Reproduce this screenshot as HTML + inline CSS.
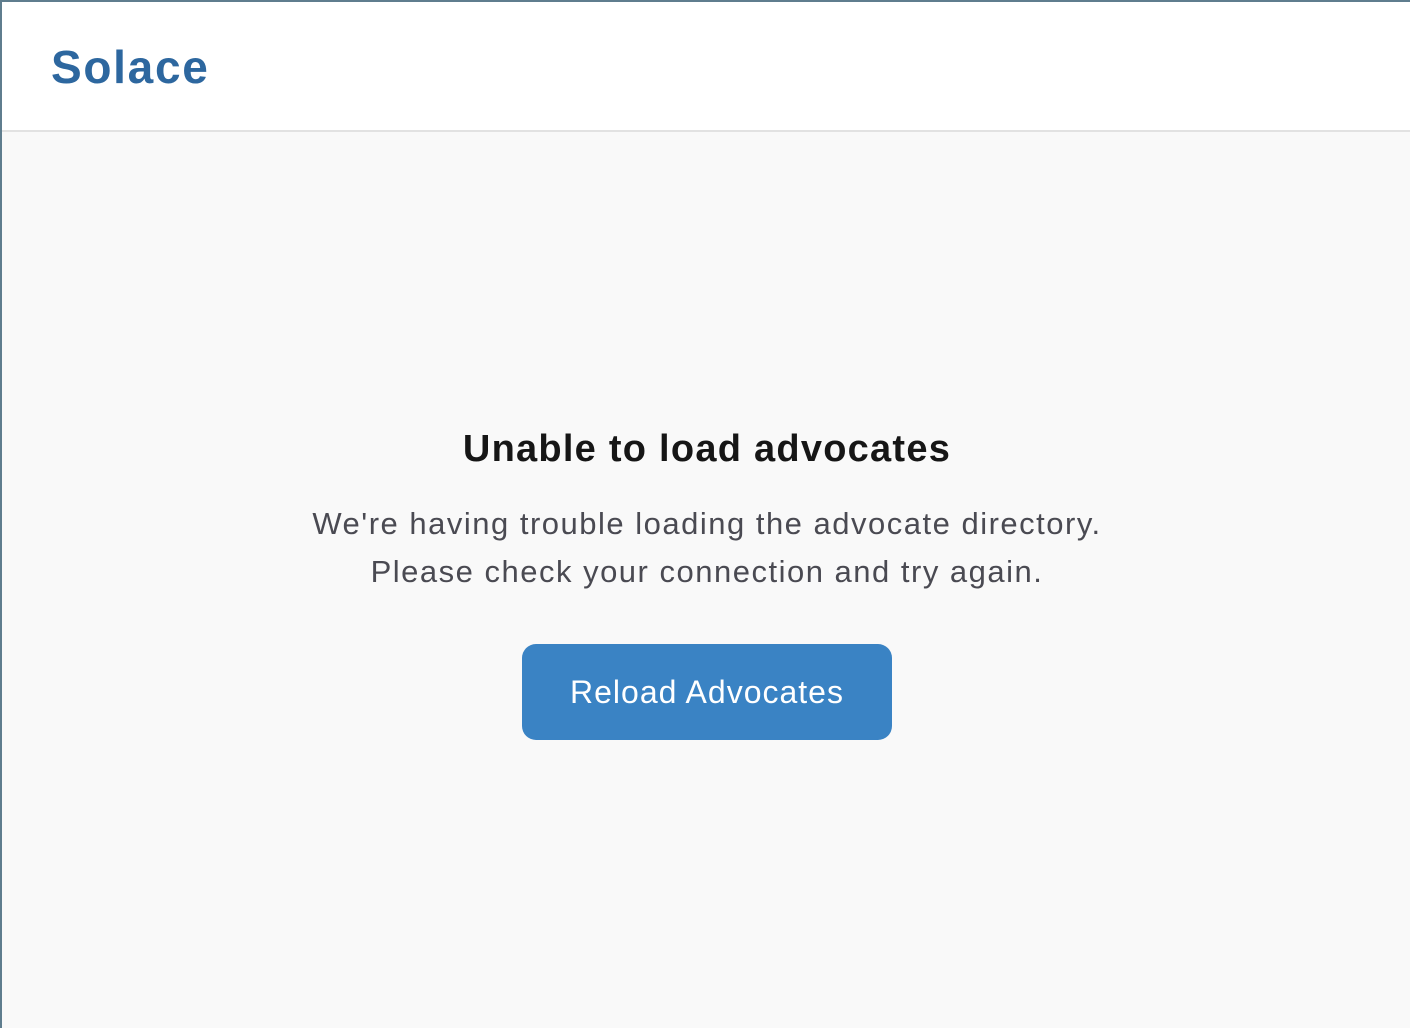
<!DOCTYPE html>
<html><head><style>
html,body{margin:0;padding:0}
body{width:1410px;height:1028px;overflow:hidden;background:#f9f9f9;font-family:"Liberation Sans",sans-serif;position:relative}
.frame{position:absolute;left:0;top:0;width:1410px;height:1028px;box-sizing:border-box;border-top:2px solid #5f7d8e;border-left:2px solid #5f7d8e}
header{position:absolute;left:2px;top:2px;right:0;height:128px;background:#fff;border-bottom:2px solid #e2e2e2}
.logo{position:absolute;left:49px;top:38px;font-size:46px;font-weight:bold;color:#2d679f;letter-spacing:1.7px}
h1{position:absolute;left:0;width:1414px;top:428px;margin:0;text-align:center;font-size:38px;font-weight:bold;color:#161616;letter-spacing:1.25px}
p{position:absolute;left:0;width:1414px;top:500px;margin:0;text-align:center;font-size:31px;line-height:48px;color:#4a4a52;letter-spacing:1.5px}
.btn{position:absolute;left:522px;top:644px;width:370px;height:96px;background:#3a83c4;border-radius:14px;color:#fff;font-size:32px;text-align:center;line-height:96px;letter-spacing:1px}
</style></head><body>
<div class="frame"></div>
<header><div class="logo">Solace</div></header>
<h1>Unable to load advocates</h1>
<p>We're having trouble loading the advocate directory.<br>Please check your connection and try again.</p>
<div class="btn">Reload Advocates</div>
</body></html>
